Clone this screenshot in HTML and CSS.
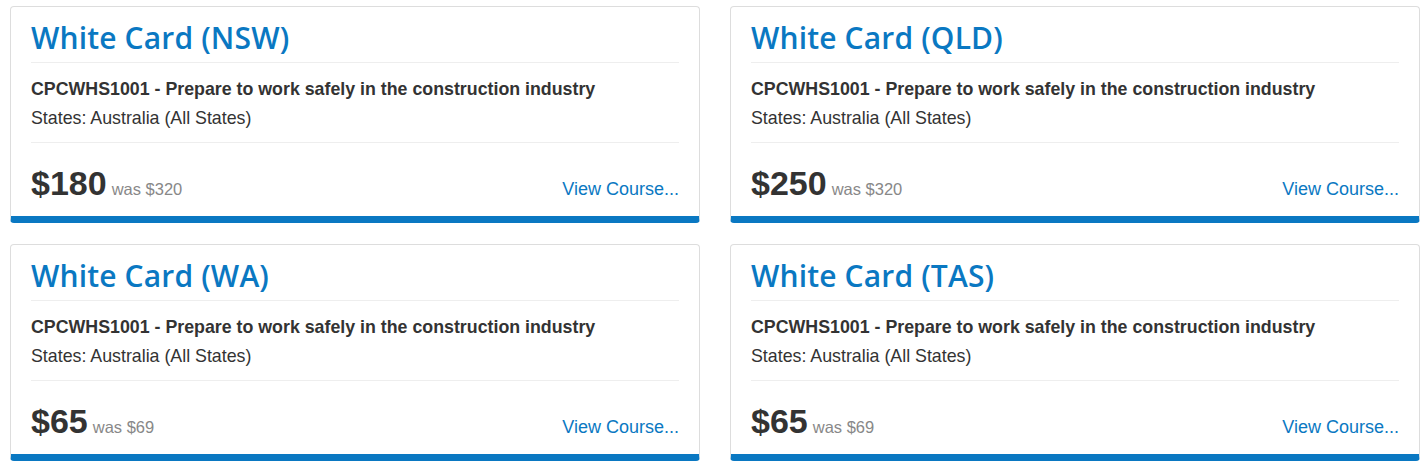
FILE: index.html
```html
<!DOCTYPE html>
<html>
<head>
<meta charset="utf-8">
<link rel="stylesheet" href="styles.css">
</head>
<body>
<div class="grid">
  <div class="card">
    <h2 class="title">White Card (NSW)</h2>
    <div class="info">
      <p class="unit">CPCWHS1001 - Prepare to work safely in the construction industry</p>
      <p class="states">States: Australia (All States)</p>
    </div>
    <div class="foot">
      <div class="price"><span class="now">$180</span><span class="was">was $320</span></div>
      <a class="view" href="#">View Course...</a>
    </div>
  </div>
  <div class="card">
    <h2 class="title">White Card (QLD)</h2>
    <div class="info">
      <p class="unit">CPCWHS1001 - Prepare to work safely in the construction industry</p>
      <p class="states">States: Australia (All States)</p>
    </div>
    <div class="foot">
      <div class="price"><span class="now">$250</span><span class="was">was $320</span></div>
      <a class="view" href="#">View Course...</a>
    </div>
  </div>
  <div class="card">
    <h2 class="title">White Card (WA)</h2>
    <div class="info">
      <p class="unit">CPCWHS1001 - Prepare to work safely in the construction industry</p>
      <p class="states">States: Australia (All States)</p>
    </div>
    <div class="foot">
      <div class="price"><span class="now">$65</span><span class="was">was $69</span></div>
      <a class="view" href="#">View Course...</a>
    </div>
  </div>
  <div class="card">
    <h2 class="title">White Card (TAS)</h2>
    <div class="info">
      <p class="unit">CPCWHS1001 - Prepare to work safely in the construction industry</p>
      <p class="states">States: Australia (All States)</p>
    </div>
    <div class="foot">
      <div class="price"><span class="now">$65</span><span class="was">was $69</span></div>
      <a class="view" href="#">View Course...</a>
    </div>
  </div>
</div>
</body>
</html>
```

FILE: styles.css
```css
html, body {
  margin: 0;
  padding: 0;
  background: #ffffff;
}
body {
  font-family: "Liberation Sans", Arial, sans-serif;
  color: #333333;
}
.grid {
  display: grid;
  grid-template-columns: 690px 690px;
  column-gap: 30px;
  row-gap: 21px;
  padding: 6px 8px 0 10px;
}
.card {
  box-sizing: border-box;
  height: 217px;
  border: 1px solid #dddddd;
  border-bottom: 7px solid #0a78c2;
  border-radius: 4px;
  padding: 0 20px;
  background: #fff;
}
.title {
  margin: 0;
  padding: 13px 0 6px;
  font-family: "Open Sans", sans-serif;
  font-weight: 600;
  font-size: 30px;
  letter-spacing: 0.15px;
  line-height: 36px;
  color: #0a78c2;
  border-bottom: 1px solid #eeeeee;
}
.info {
  padding: 12px 0 9px;
  border-bottom: 1px solid #eeeeee;
}
.info p {
  margin: 0;
  font-size: 17.8px;
  line-height: 29px;
}
.unit {
  font-weight: bold;
  color: #333;
}
.states {
  color: #333;
}
.foot {
  display: flex;
  justify-content: space-between;
  align-items: baseline;
  padding-top: 20px;
}
.price {
  display: flex;
  align-items: baseline;
}
.now {
  font-weight: bold;
  font-size: 34px;
  line-height: 40px;
  color: #333;
}
.was {
  margin-left: 5px;
  font-size: 16.5px;
  color: #888888;
}
.view {
  font-size: 18px;
  color: #0a78c2;
  text-decoration: none;
}
```
